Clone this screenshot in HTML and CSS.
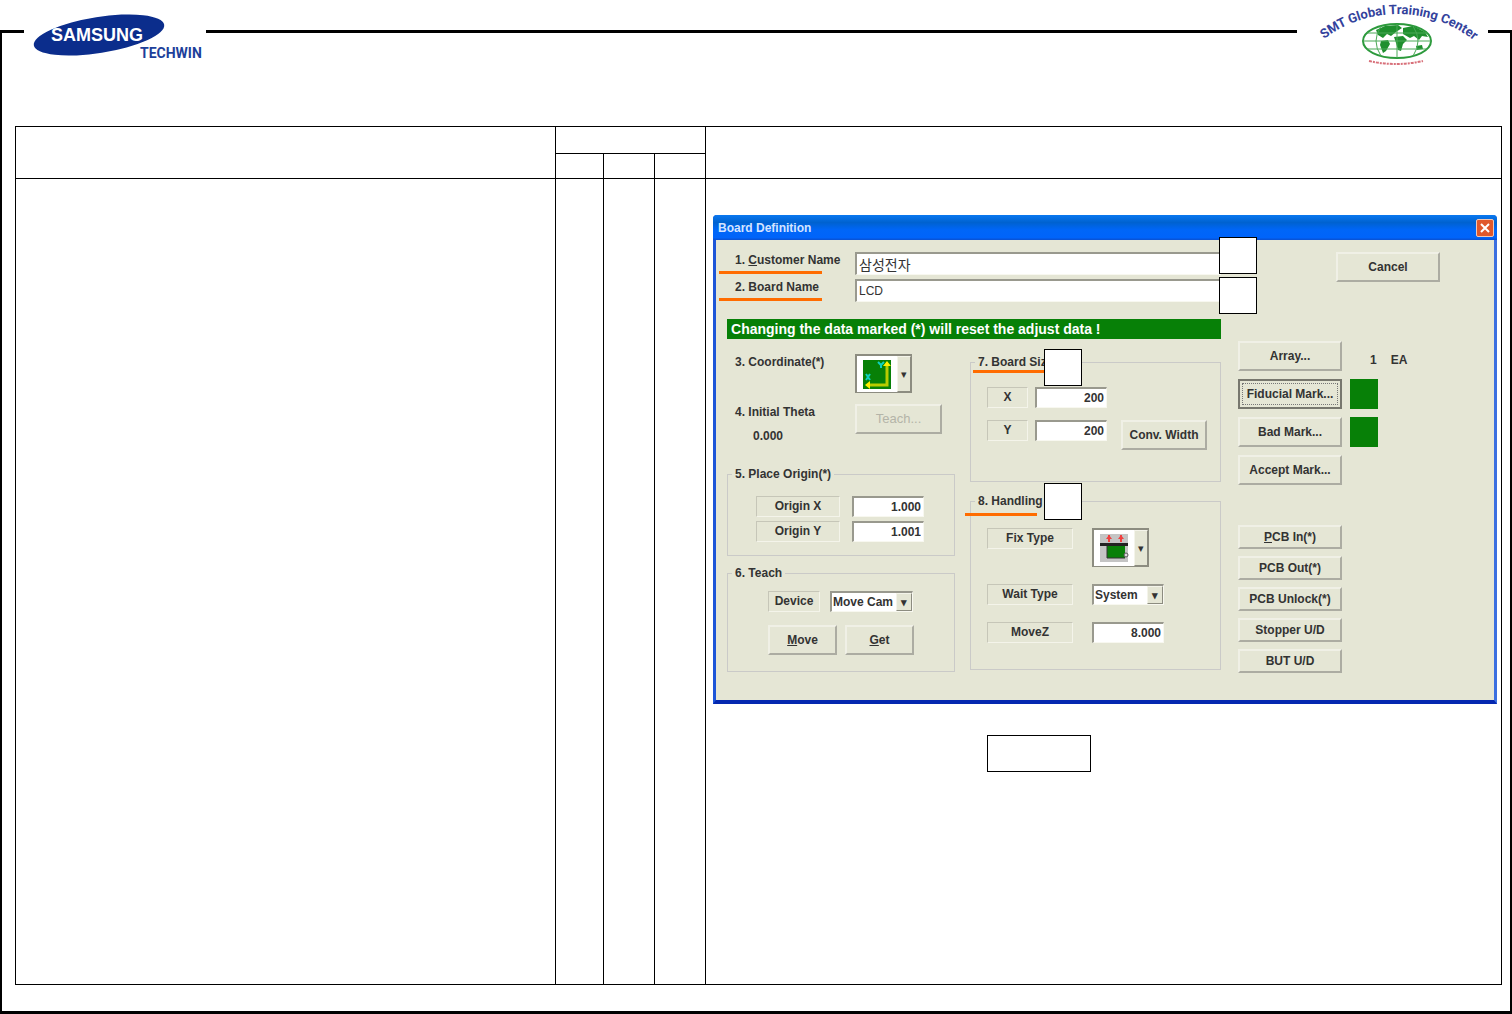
FILE: index.html
```html
<!DOCTYPE html>
<html lang="en">
<head>
    <meta charset="UTF-8">
    <meta name="viewport" content="width=device-width, initial-scale=1.0">
    <title>Board Definition</title>
    <link rel="stylesheet" href="styles.css">
</head>
<body>
    <div class="sheet">
        <header class="masthead">
            <svg class="logo" width="182" height="70" viewBox="0 0 182 70">
                <ellipse cx="75" cy="35" rx="66" ry="18" fill="#0b2d8c" transform="rotate(-9 75 35)"/>
                <text class="logo-name" x="27" y="41">SAMSUNG</text>
                <text class="logo-unit" x="116" y="58">TECHWIN</text>
            </svg>
            <svg class="logo" width="191" height="70" viewBox="0 0 191 70">
                <path id="arc" d="M27 39 A122 122 0 0 1 181 44" fill="none"/>
                <text class="center-name"><textPath href="#arc">SMT Global Training Center</textPath></text>
                <ellipse cx="100" cy="41" rx="34" ry="17" fill="#fff" stroke="#2c9a3c" stroke-width="2"/>
                <path d="M79 30 L88 26 L101 25 L105 28 L99 32 L94 36 L90 34 L86 38 L81 35 Z M106 28 L116 26 L128 32 L131 37 L125 36 L122 40 L117 36 L113 38 L106 34 Z M84 41 L91 40 L93 44 L89 51 L86 53 L83 45 Z M97 37 L106 36 L110 40 L106 44 L104 51 L101 50 L99 43 Z M119 46 L125 45 L126 49 L120 50 Z" fill="#1f8f2e"/>
                <path d="M66 41 H134 M70 33 H130 M70 49 H130 M100 24 V58 M84 26 Q74 41 84 56 M116 26 Q126 41 116 56" fill="none" stroke="#4aa956" stroke-width="1"/>
                <path d="M72 61 Q98 67 126 61" fill="none" stroke="#d8707a" stroke-width="2" stroke-dasharray="3 1 2 1"/>
            </svg>
        </header>

        <table class="steps">
            <colgroup>
                <col class="col-step">
                <col class="col-a">
                <col class="col-b">
                <col class="col-b">
                <col>
            </colgroup>
            <thead>
                <tr class="head-top">
                    <th rowspan="2"></th>
                    <th colspan="3"></th>
                    <th rowspan="2"></th>
                </tr>
                <tr class="head-sub">
                    <th></th>
                    <th></th>
                    <th></th>
                </tr>
            </thead>
            <tbody>
                <tr>
                    <td></td>
                    <td></td>
                    <td></td>
                    <td></td>
                    <td class="screen">
                        <section class="dialog">
                            <div class="titlebar">
                                <h1>Board Definition</h1>
                                <button class="close" aria-label="Close">
                                    <svg width="18" height="18" viewBox="0 0 18 18">
                                        <path d="M5 5 L13 13 M13 5 L5 13" stroke="#fff" stroke-width="2"/>
                                    </svg>
                                </button>
                            </div>

                            <div class="dialog-body">
                                <div class="main">
                                    <div class="name-row">
                                        <label for="customer">1. <u>C</u>ustomer Name</label>
                                        <input type="text" id="customer" class="korean" value="삼성전자">
                                        <span class="underline"></span>
                                        <span class="marker"></span>
                                    </div>
                                    <div class="name-row">
                                        <label for="board">2. Board Name</label>
                                        <input type="text" id="board" value="LCD">
                                        <span class="underline"></span>
                                        <span class="marker"></span>
                                    </div>

                                    <p class="banner">Changing the data marked (*) will reset the adjust data !</p>

                                    <div class="columns">
                                        <div>
                                            <div class="coords">
                                                <label for="coordinate">3. Coordinate(*)</label>
                                                <button id="coordinate" class="picker">
                                                    <svg width="40" height="35" viewBox="0 0 40 35">
                                                        <rect x="6" y="4" width="28" height="29" fill="#078007"/>
                                                        <path d="M30 8 V29 H11" fill="none" stroke="#b8cc00" stroke-width="3"/>
                                                        <path d="M26 10 L30 5 L34 10 Z M13 25 L8 29 L13 33 Z" fill="#ffee00"/>
                                                        <path d="M21 6 L24 9 L27 6 M24 9 V12 M9 18 L13 24 M13 18 L9 24" fill="none" stroke="#10d0c0" stroke-width="2"/>
                                                    </svg>
                                                    <span class="drop"></span>
                                                </button>
                                                <div class="theta">
                                                    <span>4. Initial Theta</span>
                                                    <span class="theta-value">0.000</span>
                                                </div>
                                                <button class="btn" disabled>Teach...</button>
                                            </div>

                                            <fieldset class="origin">
                                                <legend>5. Place Origin(*)</legend>
                                                <div class="rows">
                                                    <label class="tag" for="origin-x">Origin X</label>
                                                    <input type="text" id="origin-x" class="number" value="1.000">
                                                    <label class="tag" for="origin-y">Origin Y</label>
                                                    <input type="text" id="origin-y" class="number" value="1.001">
                                                </div>
                                            </fieldset>

                                            <fieldset class="teach">
                                                <legend>6. Teach</legend>
                                                <div class="rows">
                                                    <div class="device">
                                                        <label class="tag" for="device">Device</label>
                                                        <span class="select">
                                                            <select id="device"><option>Move Cam</option></select>
                                                        </span>
                                                    </div>
                                                    <div class="teach-buttons">
                                                        <button class="btn"><u>M</u>ove</button>
                                                        <button class="btn"><u>G</u>et</button>
                                                    </div>
                                                </div>
                                            </fieldset>
                                        </div>

                                        <div>
                                            <div class="group size">
                                                <fieldset>
                                                    <legend>7. Board Size(*)</legend>
                                                    <div class="rows">
                                                        <label class="tag" for="size-x">X</label>
                                                        <input type="text" id="size-x" class="number" value="200">
                                                        <span></span>
                                                        <label class="tag" for="size-y">Y</label>
                                                        <input type="text" id="size-y" class="number" value="200">
                                                        <button class="btn">Conv. Width</button>
                                                    </div>
                                                </fieldset>
                                                <span class="underline"></span>
                                                <span class="marker"></span>
                                            </div>

                                            <div class="group handling">
                                                <fieldset>
                                                    <legend>8. Handling</legend>
                                                    <div class="rows">
                                                        <label class="tag" for="fix-type">Fix Type</label>
                                                        <button id="fix-type" class="picker">
                                                            <svg width="40" height="35" viewBox="0 0 40 35">
                                                                <rect x="6" y="4" width="28" height="28" fill="#c4c4c4"/>
                                                                <path d="M15 5 V12 M27 5 V12" stroke="#f04040" stroke-width="2"/>
                                                                <path d="M12 9 L15 5 L18 9 Z M24 9 L27 5 L30 9 Z" fill="#f04040"/>
                                                                <rect x="6" y="13" width="28" height="3" fill="#222"/>
                                                                <rect x="13" y="16" width="18" height="12" fill="#088008"/>
                                                                <path d="M13 16 V28 H31" fill="none" stroke="#333" stroke-width="1"/>
                                                                <circle cx="32" cy="25" r="2" fill="#ddd" stroke="#555"/>
                                                            </svg>
                                                            <span class="drop"></span>
                                                        </button>
                                                        <label class="tag" for="wait-type">Wait Type</label>
                                                        <span class="select">
                                                            <select id="wait-type"><option>System</option></select>
                                                        </span>
                                                        <label class="tag" for="move-z">MoveZ</label>
                                                        <input type="text" id="move-z" class="number" value="8.000">
                                                    </div>
                                                </fieldset>
                                                <span class="underline"></span>
                                                <span class="marker"></span>
                                            </div>
                                        </div>
                                    </div>
                                </div>

                                <div class="side">
                                    <button class="btn cancel">Cancel</button>
                                    <div class="marks">
                                        <button class="btn">Array...</button>
                                        <div class="count"><span>1</span><span>EA</span></div>
                                        <button class="btn focused">Fiducial Mark...</button>
                                        <span class="lamp"></span>
                                        <button class="btn">Bad Mark...</button>
                                        <span class="lamp"></span>
                                        <button class="btn">Accept Mark...</button>
                                    </div>
                                    <div class="pcb">
                                        <button class="btn"><u>P</u>CB In(*)</button>
                                        <button class="btn">PCB Out(*)</button>
                                        <button class="btn">PCB Unlock(*)</button>
                                        <button class="btn">Stopper U/D</button>
                                        <button class="btn">BUT U/D</button>
                                    </div>
                                </div>
                            </div>
                        </section>

                        <div class="caption"></div>
                    </td>
                </tr>
            </tbody>
        </table>
    </div>
</body>
</html>
```
FILE: styles.css
```css
* {
    box-sizing: border-box;
}

body {
    margin: 0;
    padding-top: 30px;
    background-color: #fff;
    color: #333;
    font-family: "Liberation Sans", Arial, sans-serif;
    font-size: 12px;
    line-height: 16px;
}

/* page frame */
.sheet {
    min-height: calc(100vh - 30px);
    padding: 0 8px 26px 13px;
    border: 2px solid #000;
    border-width: 3px 2px;
}

.masthead {
    display: flex;
    justify-content: space-between;
    margin: -33px 14px 56px 9px;
}

.logo {
    display: block;
    background-color: #fff;
}

.logo-name {
    font-size: 18px;
    font-weight: bold;
    fill: #fff;
}

.logo-unit {
    font-family: Roboto, sans-serif;
    font-size: 14px;
    font-weight: bold;
    fill: #1d3f9a;
}

.center-name {
    font-family: Roboto, sans-serif;
    font-size: 13px;
    font-weight: bold;
    fill: #33429c;
}

.steps {
    width: 100%;
    height: calc(100vh - 155px);
    table-layout: fixed;
    border-collapse: collapse;
}

.steps th,
.steps td {
    padding: 0;
    border: 1px solid #000;
    vertical-align: top;
}

.col-step {
    width: 540px;
}

.col-a {
    width: 48px;
}

.col-b {
    width: 51px;
}

.head-top {
    height: 27px;
}

.head-sub {
    height: 25px;
}

.steps .screen {
    padding: 36px 4px 0 7px;
}

.caption {
    width: 104px;
    height: 37px;
    margin: 31px 0 0 35%;
    border: 1px solid #000;
}

/* dialog window */
.dialog {
    border: 3px solid #1d55d8;
    border-top: 0;
    border-right-color: #3b6fe0;
    border-bottom: 4px solid #0428b0;
    border-radius: 4px 4px 0 0;
    background-color: #e5e6d5;
    font-weight: bold;
}

.titlebar {
    display: flex;
    align-items: center;
    justify-content: space-between;
    height: 25px;
    margin: 0 -3px;
    padding: 0 3px 0 5px;
    border-radius: 4px 4px 0 0;
    background: linear-gradient(#0a78f0, #0062d0 30%, #0066f8 60%, #0064fa 90%, #0a50d0);
}

.titlebar h1 {
    margin: 0;
    color: #d4e4ff;
    font-size: 12px;
}

.close {
    width: 18px;
    height: 18px;
    padding: 0;
    border: 1px solid #f0c8b8;
    border-radius: 2px;
    background-color: #e0582c;
}

.close svg {
    display: block;
    margin: -1px;
}

.dialog-body {
    display: flex;
    gap: 17px;
    padding: 12px 0 27px 11px;
}

.main {
    flex: 1;
}

.side {
    width: 256px;
}

/* controls */
input,
select,
.btn {
    color: inherit;
    font: inherit;
}

input,
select {
    border: 1px solid #f8f8f0;
    border-top: 2px solid #99998e;
    border-left: 2px solid #99998e;
    border-radius: 0;
    background-color: #fff;
}

.number {
    width: 72px;
    height: 21px;
    padding: 0 2px;
    text-align: right;
}

.btn {
    height: 30px;
    padding: 0;
    border: 2px solid #f0f0e6;
    border-right-color: #acaca2;
    border-bottom-color: #acaca2;
    background-color: #e5e6d5;
}

.btn:disabled {
    color: #b4b4a8;
    font-size: 13px;
    font-weight: normal;
}

.focused {
    border-color: #77776e;
    outline: 1px dotted #777;
    outline-offset: -5px;
}

.tag {
    height: 21px;
    border: 1px solid #c6c6b8;
    border-right-color: #f4f4ea;
    border-bottom-color: #f4f4ea;
    line-height: 19px;
    text-align: center;
}

.select {
    position: relative;
    height: 21px;
}

.select select {
    width: 100%;
    height: 100%;
    padding: 0 14px 0 1px;
    appearance: none;
}

/* arrow box at the right end of a drop-down */
.select::after,
.drop {
    width: 14px;
    border: 1px solid #f4f4ea;
    border-right-color: #8c8c80;
    border-bottom-color: #8c8c80;
    background-color: #e5e6d5;
    color: #333;
    content: "▾";
    font-size: 11px;
    line-height: 16px;
    text-align: center;
}

.select::after {
    position: absolute;
    top: 2px;
    right: 1px;
    bottom: 1px;
    pointer-events: none;
}

.picker {
    display: flex;
    width: 57px;
    height: 39px;
    padding: 0;
    border: 1px solid #8c8c80;
    border-width: 2px 1px 1px 2px;
    background-color: #fff;
}

.drop {
    display: flex;
    align-items: center;
    justify-content: center;
    height: 36px;
}

.drop::before {
    content: "▾";
}

/* callouts laid over the dialog */
.marker {
    position: absolute;
    width: 38px;
    height: 37px;
    border: 1px solid #000;
    background-color: #fff;
}

.underline {
    position: absolute;
    width: 72px;
    height: 3px;
    background-color: #ff6c00;
}

.name-row {
    position: relative;
    display: flex;
    margin-bottom: 4px;
    padding-left: 8px;
}

.name-row label {
    width: 120px;
}

.name-row input {
    flex: 1;
    height: 23px;
    padding: 0 2px;
    font-weight: normal;
}

.name-row .korean {
    font-family: "Liberation Sans", "Noto Sans CJK KR", sans-serif;
    font-size: 14px;
}

.name-row .underline {
    top: 19px;
    left: -8px;
    width: 103px;
}

.name-row .marker {
    top: -15px;
    right: -36px;
}

.name-row + .name-row .marker {
    top: -2px;
}

.banner {
    margin: 17px 0 15px;
    padding: 0 4px;
    background-color: #078007;
    color: #fff;
    font-size: 14px;
    line-height: 20px;
}

.columns {
    display: grid;
    grid-template-columns: 228fr 251fr;
    gap: 15px;
}

.coords {
    display: grid;
    grid-template-columns: 120px 87px;
    row-gap: 11px;
    margin-bottom: 22px;
    padding-left: 8px;
}

.theta {
    display: flex;
    flex-direction: column;
    gap: 8px;
}

.theta-value {
    padding-left: 18px;
}

fieldset {
    min-width: 0;
    margin: 0;
    padding: 0;
    border: 1px solid #cacac8;
}

legend {
    margin-left: 4px;
    padding: 0 3px;
}

.rows {
    display: grid;
    align-items: start;
}

.origin {
    margin-bottom: 9px;
}

.origin .rows {
    grid-template-columns: 84px 72px;
    gap: 4px 12px;
    padding: 14px 0 13px 28px;
}

.teach .rows {
    gap: 13px;
    padding: 10px 0 16px 40px;
}

.device {
    display: flex;
    gap: 10px;
}

.device .tag {
    width: 52px;
}

.device .select {
    width: 83px;
}

.teach-buttons {
    display: flex;
    gap: 8px;
}

.teach-buttons .btn {
    width: 69px;
}

.group {
    position: relative;
}

.group .marker {
    top: -5px;
    left: 74px;
}

.size {
    margin-bottom: 11px;
}

.size .rows {
    grid-template-columns: 41px 72px 93px;
    gap: 12px 7px;
    padding: 17px 0 31px 16px;
}

.size .btn {
    margin-left: 7px;
}

.size .underline {
    top: 16px;
    left: 3px;
}

.handling .rows {
    grid-template-columns: 86px 72px;
    gap: 17px 19px;
    padding: 19px 0 26px 16px;
}

.handling .marker {
    top: -10px;
}

.handling .underline {
    top: 20px;
    left: -5px;
}

.cancel {
    width: 104px;
    margin-left: 98px;
}

.marks {
    display: grid;
    grid-template-columns: 104px 28px;
    gap: 8px;
    margin: 59px 0 40px;
}

.count {
    display: flex;
    gap: 14px;
    padding: 11px 0 0 20px;
}

.lamp {
    background-color: #078007;
}

.pcb {
    display: grid;
    grid-template-columns: 104px;
    gap: 7px;
}

.pcb .btn {
    height: 24px;
}
```
